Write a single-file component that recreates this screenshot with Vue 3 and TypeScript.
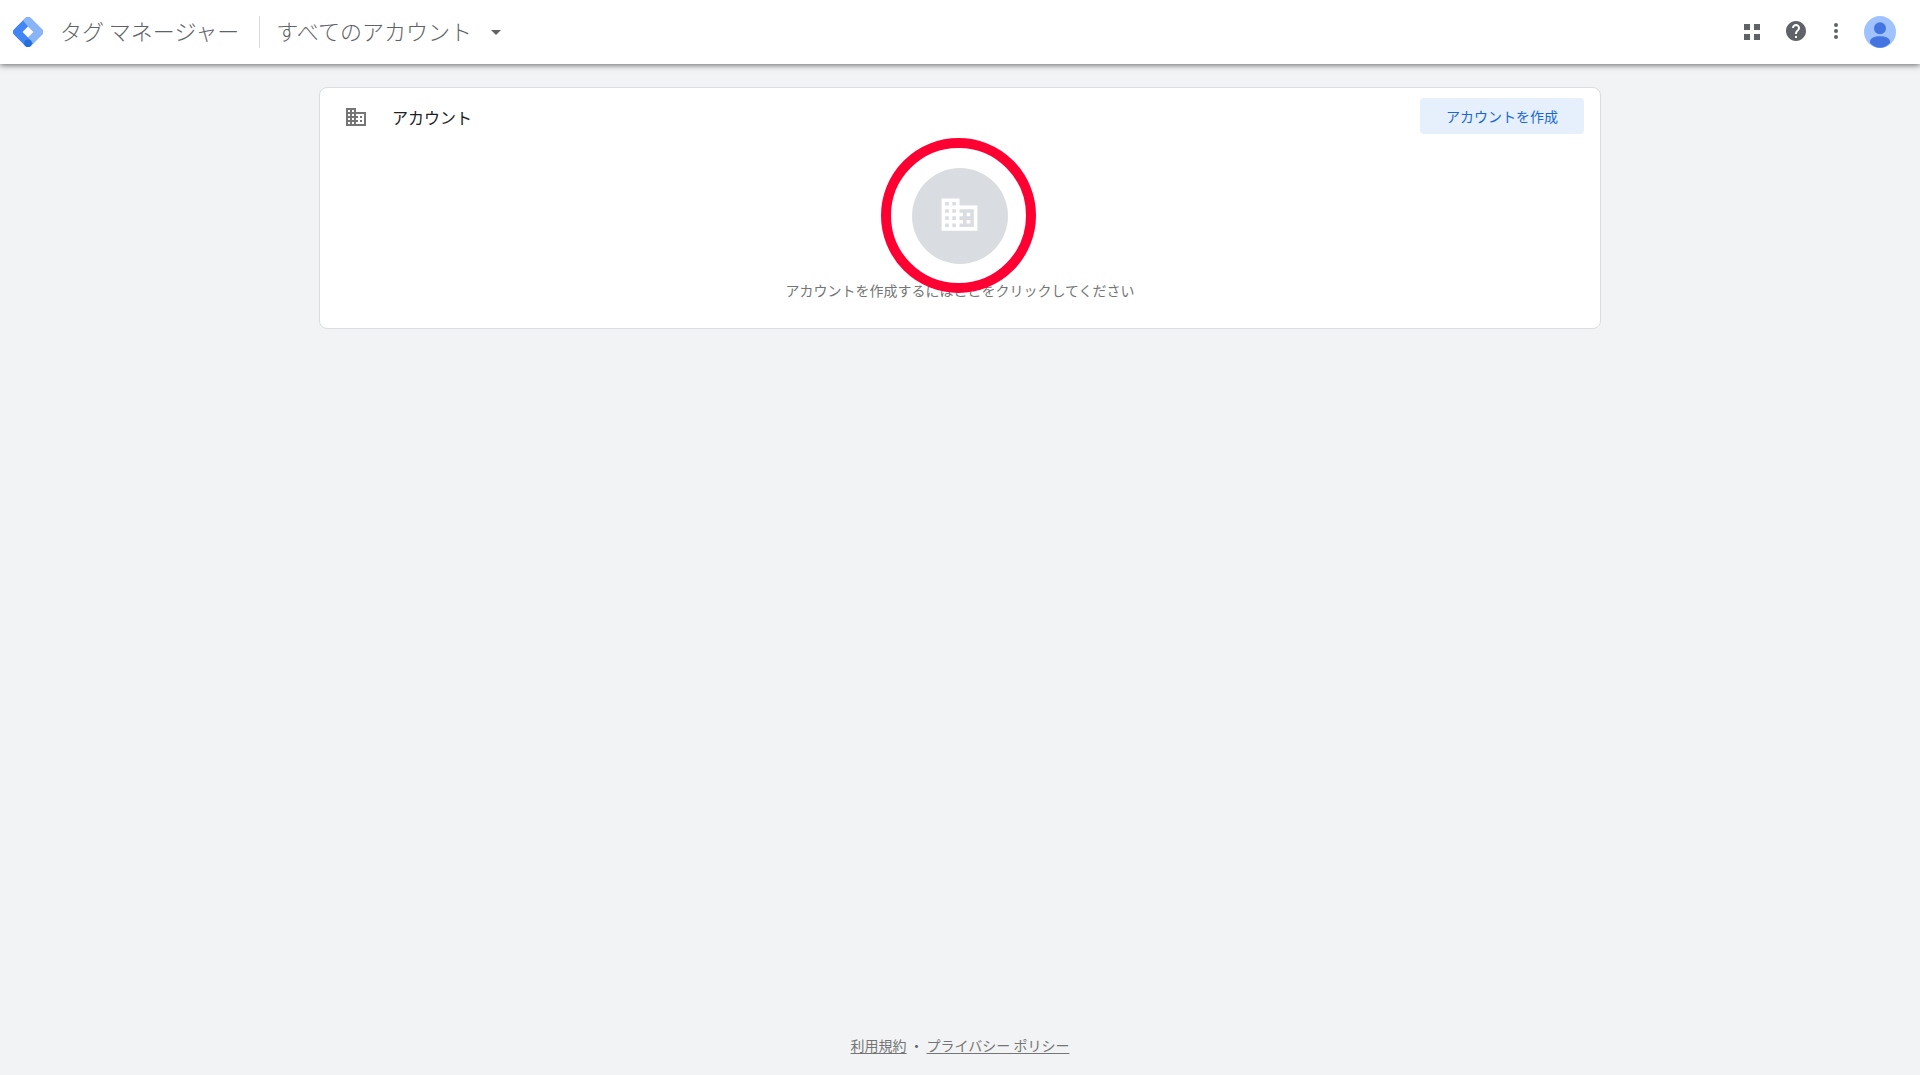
<script setup lang="ts">
const product = 'タグ マネージャー'
const scope = 'すべてのアカウント'
const domainPath =
  'M12 7V3H2v18h20V7H12zM6 19H4v-2h2v2zm0-4H4v-2h2v2zm0-4H4V9h2v2zm0-4H4V5h2v2zm4 12H8v-2h2v2zm0-4H8v-2h2v2zm0-4H8V9h2v2zm0-4H8V5h2v2zm10 12h-8v-2h2v-2h-2v-2h2v-2h-2V9h8v10zm-2-8h-2v2h2v-2zm0 4h-2v2h2v-2z'
</script>

<template>
  <div class="page">
    <header class="bar">
      <a class="brand" href="#">
        <svg class="logo" width="30" height="30" viewBox="0 0 30 30" aria-hidden="true">
          <path d="M12.300 1.100a3.800 3.800 0 0 1 5.400 0L28.900 12.300a3.800 3.800 0 0 1 0 5.400L17.700 28.900a3.800 3.800 0 0 1-5.400 0L1.100 17.700a3.800 3.800 0 0 1 0-5.400z" fill="#4285f4" />
          <path d="M10 3.400 12.300 1.100a3.800 3.800 0 0 1 5.400 0L28.900 12.300a3.800 3.800 0 0 1 0 5.400L20.200 26.400 15 20.500 20.500 15 15 9.500z" fill="#8ab4f8" />
          <path d="M15 9.500 20.500 15 15 20.500 9.500 15z" fill="#fff" />
          <circle cx="15" cy="26.200" r="3.800" fill="#246fdb" />
        </svg>
        <span>{{ product }}</span>
      </a>
      <button class="scope" type="button">
        <span>{{ scope }}</span>
        <svg width="24" height="24" viewBox="0 0 24 24" aria-hidden="true"><path d="M7 10l5 5 5-5z" fill="currentColor" /></svg>
      </button>
      <nav class="tools">
        <button class="apps" type="button" aria-label="アプリ">
          <svg width="24" height="24" viewBox="0 0 24 24"><path d="M4 5h6v6H4zM14 5h6v6h-6zM4 15h6v6H4zM14 15h6v6h-6z" fill="currentColor" /></svg>
        </button>
        <button type="button" aria-label="ヘルプ">
          <svg width="24" height="24" viewBox="0 0 24 24"><path d="M12 2C6.480 2 2 6.480 2 12s4.480 10 10 10 10-4.480 10-10S17.520 2 12 2zm1 17h-2v-2h2v2zm2.070-7.750l-.9.920C13.450 12.900 13 13.500 13 15h-2v-.5c0-1.100.450-2.100 1.170-2.830l1.240-1.260c.370-.360.590-.860.590-1.410 0-1.100-.9-2-2-2s-2 .9-2 2H8c0-2.210 1.790-4 4-4s4 1.790 4 4c0 .880-.360 1.680-.930 2.250z" fill="currentColor" /></svg>
        </button>
        <button type="button" aria-label="その他">
          <svg width="24" height="24" viewBox="0 0 24 24"><g fill="currentColor"><circle cx="12" cy="6" r="2" /><circle cx="12" cy="12" r="2" /><circle cx="12" cy="18" r="2" /></g></svg>
        </button>
        <button class="avatar" type="button" aria-label="プロフィール">
          <svg width="32" height="32" viewBox="0 0 32 32">
            <circle cx="16" cy="16" r="16" fill="#a0c3ff" />
            <circle cx="16" cy="12.300" r="6" fill="#4374e0" />
            <path d="M6 27v-1.500C6 22 11 20.300 16 20.300S26 22 26 25.500V27c-2.600 3-6 4.700-10 4.700S8.600 30 6 27z" fill="#4374e0" />
          </svg>
        </button>
      </nav>
    </header>

    <main>
      <section class="card">
        <div class="card-head">
          <svg class="domain" width="24" height="24" viewBox="0 0 24 24" aria-hidden="true"><path :d="domainPath" fill="currentColor" /></svg>
          <h1>アカウント</h1>
          <button class="create" type="button">アカウントを作成</button>
        </div>
        <button class="empty" type="button">
          <span class="disc">
            <svg width="43" height="43" viewBox="0 0 24 24" aria-hidden="true"><path :d="domainPath" fill="currentColor" /></svg>
            <span class="ring"></span>
          </span>
          <span class="hint">アカウントを作成するにはここをクリックしてください</span>
        </button>
      </section>
    </main>

    <footer class="foot">
      <a href="#">利用規約</a>
      <span>・</span>
      <a href="#">プライバシー ポリシー</a>
    </footer>
  </div>
</template>

<style>
body {
  background: #f1f3f4;
}
</style>

<style scoped>
.page {
  display: flex;
  flex-direction: column;
  min-height: 100vh;
  background: #f1f3f4;
  color: #5f6368;
  font-family: "Noto Sans CJK JP", sans-serif;
  font-size: 14px;
}
button {
  padding: 0;
  border: 0;
  background: none;
  color: inherit;
  font: inherit;
  cursor: pointer;
}
svg {
  display: block;
}
.bar {
  display: flex;
  align-items: center;
  height: 64px;
  padding: 0 24px 0 13px;
  background: #fff;
  box-shadow: 0 1px 6px rgba(0, 0, 0, 0.6);
}
.brand,
.scope {
  display: flex;
  align-items: center;
  height: 32px;
  color: #5f6368;
  font-size: 22px;
  font-weight: 300;
  text-decoration: none;
}
.brand span,
.scope span {
  padding-bottom: 4px;
  line-height: 28px;
}
.brand {
  gap: 17px;
  padding-right: 20px;
  border-right: 1px solid #dadce0;
}
.scope {
  gap: 12px;
  padding-left: 16px;
}
.tools {
  display: flex;
  align-items: center;
  gap: 16px;
  margin-left: auto;
}
.tools button {
  padding-bottom: 2px;
}
.tools .apps {
  margin-right: 4px;
}
.tools .avatar {
  padding: 0;
}
main {
  flex: 1;
  padding: 23px 24px;
}
.card {
  box-sizing: border-box;
  max-width: 1282px;
  margin: 0 auto;
  padding-bottom: 26px;
  border: 1px solid #dadce0;
  border-radius: 8px;
  background: #fff;
}
.card-head {
  display: flex;
  align-items: center;
  height: 58px;
  padding: 0 16px 0 24px;
}
.domain {
  color: #757575;
}
h1 {
  margin: 0 auto 0 24px;
  color: #202124;
  font-size: 16px;
  font-weight: 400;
  line-height: 24px;
}
.create {
  height: 36px;
  margin-bottom: 2px;
  padding: 0 26px;
  border-radius: 4px;
  background: #e6f0fc;
  color: #1967d2;
}
.empty {
  display: flex;
  flex-direction: column;
  align-items: center;
  gap: 14px;
  margin: 22px auto 0;
  color: #757575;
}
.disc {
  box-sizing: border-box;
  position: relative;
  display: flex;
  align-items: center;
  justify-content: center;
  width: 96px;
  height: 96px;
  padding-bottom: 3px;
  border-radius: 50%;
  background: #d9dce1;
  color: #fff;
}
.ring {
  position: absolute;
  inset: -30px -28px -29px -31px;
  z-index: 1;
  border: 10px solid #ff0033;
  border-radius: 50%;
}
.hint {
  line-height: 24px;
}
.foot {
  display: flex;
  justify-content: center;
  gap: 3px;
  padding: 20px 24px;
  color: #5f6368;
  line-height: 20px;
}
.foot a {
  color: #757575;
  text-underline-offset: 2px;
}
</style>
